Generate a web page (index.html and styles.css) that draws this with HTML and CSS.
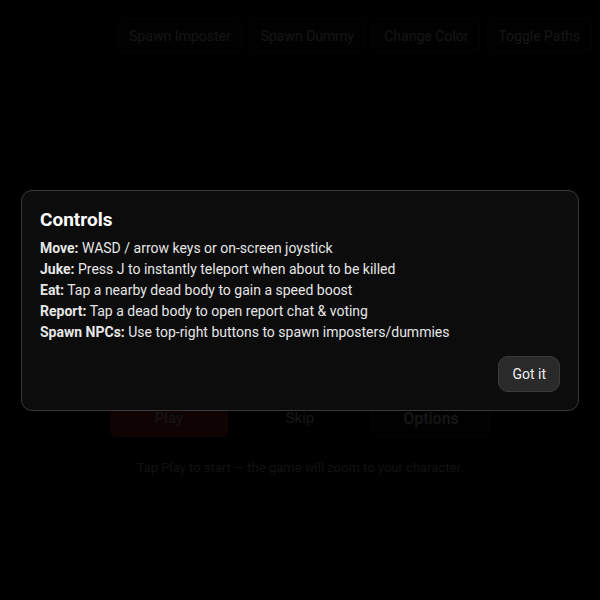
FILE: index.html
```html
<!DOCTYPE html>
<html lang="en">
<head>
    <meta charset="UTF-8">
    <meta name="viewport" content="width=device-width, initial-scale=1.0">
    <title>Imposter Sandbox</title>
    <link rel="stylesheet" href="styles.css">
</head>
<body>
    <div id="game">
        <div class="toolbar">
            <button class="tool-btn">Spawn Imposter</button>
            <button class="tool-btn">Spawn Dummy</button>
            <button class="tool-btn">Change Color</button>
            <button class="tool-btn">Toggle Paths</button>
        </div>

        <div class="menu">
            <div class="menu-buttons">
                <button class="menu-btn play">Play</button>
                <button class="menu-btn skip">Skip</button>
                <button class="menu-btn options">Options</button>
            </div>
            <p class="hint">Tap Play to start — the game will zoom to your character.</p>
        </div>
    </div>

    <!-- controls help dialog -->
    <div class="overlay">
        <div class="dialog">
            <h2>Controls</h2>
            <ul class="controls-list">
                <li><b>Move:</b> WASD / arrow keys or on-screen joystick</li>
                <li><b>Juke:</b> Press J to instantly teleport when about to be killed</li>
                <li><b>Eat:</b> Tap a nearby dead body to gain a speed boost</li>
                <li><b>Report:</b> Tap a dead body to open report chat &amp; voting</li>
                <li><b>Spawn NPCs:</b> Use top-right buttons to spawn imposters/dummies</li>
            </ul>
            <div class="dialog-actions">
                <button class="got-it">Got it</button>
            </div>
        </div>
    </div>
</body>
</html>
```

FILE: styles.css
```css
html, body {
    margin: 0;
    height: 100%;
    background: #000;
    font-family: Roboto, "Liberation Sans", sans-serif;
    color: #eee;
    overflow: hidden;
}
button {
    font-family: inherit;
    cursor: pointer;
}

/* game screen behind the dialog */
#game {
    height: 100%;
    display: flex;
    flex-direction: column;
}
.toolbar {
    display: flex;
    justify-content: flex-end;
    gap: 6px;
    padding: 18px 8px 0 0;
}
.tool-btn {
    height: 35px;
    padding: 0 11px;
    font-size: 14px;
    color: #ddd;
    background: #141414;
    border: 1px solid #333;
    border-radius: 6px;
}
.menu {
    margin-top: 346px;
    text-align: center;
}
.menu-buttons {
    display: flex;
    justify-content: center;
    gap: 13px;
}
.menu-btn {
    width: 118px;
    height: 38px;
    font-size: 15px;
    color: #eee;
    border-radius: 6px;
    border: 1px solid #444;
    background: #111;
}
.menu-btn.play {
    background: #a02020;
    border-color: #a82828;
}
.menu-btn.skip {
    background: transparent;
    border-color: transparent;
}
.menu-btn.options {
    font-size: 16px;
    font-weight: 500;
}
.hint {
    margin: 23px 0 0;
    font-size: 13px;
    color: #bbb;
}

/* dim layer + dialog */
.overlay {
    position: fixed;
    inset: 0;
    background: rgba(0, 0, 0, 0.91);
    display: flex;
    align-items: center;
    justify-content: center;
    padding: 0 21px;
}
.dialog {
    flex: 1;
    box-sizing: border-box;
    background: #0c0c0c;
    border: 1px solid #3a3a3a;
    border-radius: 11px;
    padding: 17px 18px 18px;
}
.dialog h2 {
    margin: 0 0 7px;
    font-size: 19px;
    font-weight: 700;
    color: #fff;
}
.controls-list {
    list-style: none;
    margin: 0;
    padding: 0;
    font-size: 14px;
    line-height: 21px;
    color: #e6e6e6;
}
.controls-list b {
    font-weight: 700;
}
.dialog-actions {
    display: flex;
    justify-content: flex-end;
    margin-top: 13px;
}
.got-it {
    height: 36px;
    padding: 0 13px;
    font-size: 14px;
    color: #f0f0f0;
    background: #2a2a2a;
    border: 1px solid #3c3c3c;
    border-radius: 10px;
}
```
